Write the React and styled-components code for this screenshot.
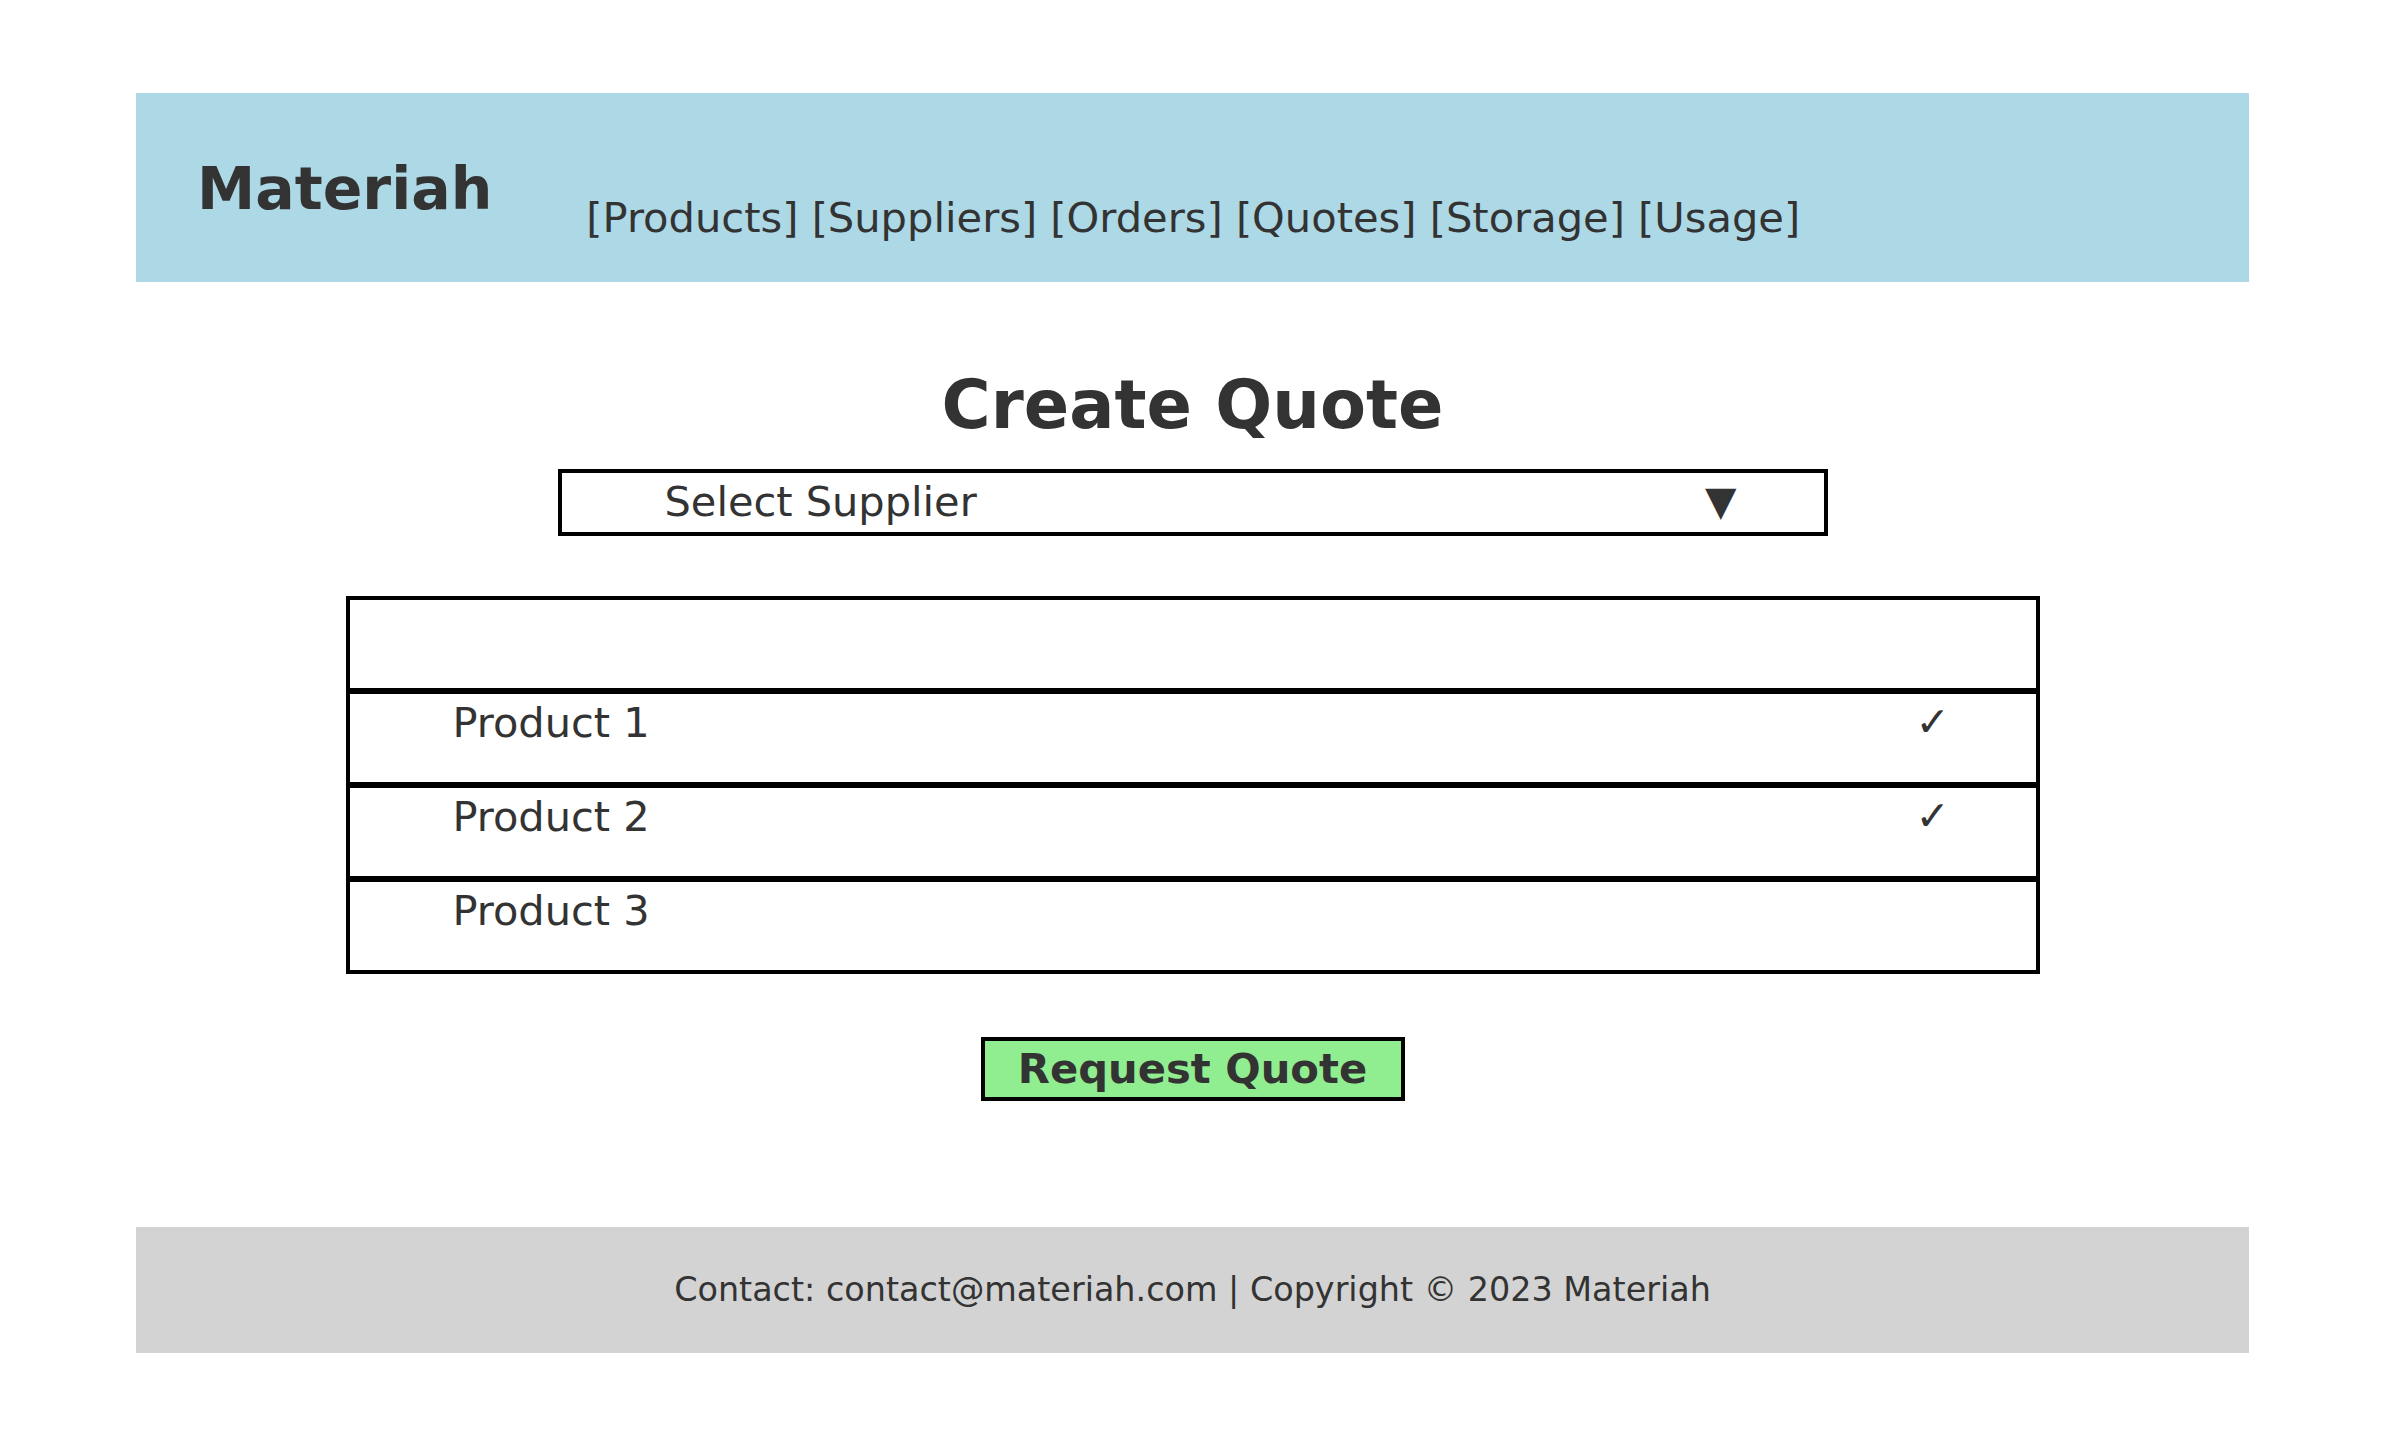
import React from "react";
import styled, { createGlobalStyle } from "styled-components";

const Global = createGlobalStyle`
  html, body { margin: 0; padding: 0; background: #ffffff; }
  body { font-family: "DejaVu Sans", "Liberation Sans", sans-serif; color: #333333; }
`;

const Page = styled.div`
  width: 2113px;
  margin: 0 auto;
  padding-top: 93px;
  display: flex;
  flex-direction: column;
  align-items: center;
`;

const Header = styled.header`
  align-self: stretch;
  height: 189px;
  box-sizing: border-box;
  background: #add8e6;
  display: flex;
  align-items: center;
  padding-left: 61px;
`;

const Logo = styled.h1`
  margin: 4px 0 0;
  font-size: 58.5px;
  line-height: 1;
  font-weight: bold;
  color: #333333;
`;

const Nav = styled.nav`
  margin-left: 94px;
  margin-top: 60px;
  font-size: 41.6px;
  line-height: 1;
  color: #333333;
  white-space: pre;
`;

const Title = styled.h2`
  margin: 90px 0 0;
  font-size: 67px;
  line-height: 1;
  font-weight: bold;
  color: #333333;
`;

const Select = styled.div`
  margin-top: 30px;
  width: 1270px;
  height: 67px;
  box-sizing: border-box;
  border: 4px solid #000000;
  display: flex;
  align-items: center;
  justify-content: space-between;
  padding: 0 87px 2px 103px;
  font-size: 41.5px;
  line-height: 1;
  color: #333333;
`;

const Arrow = styled.span`
  font-size: 41px;
  line-height: 1;
`;

const Table = styled.div`
  margin-top: 60px;
  width: 1694px;
  box-sizing: border-box;
  border: 4px solid #000000;
  display: flex;
  flex-direction: column;
`;

const Row = styled.div`
  box-sizing: content-box;
  display: grid;
  grid-template-columns: 1fr 120px;
  align-items: start;
  font-size: 41.5px;
  line-height: 1;
  color: #333333;
  border-top: ${(p) => (p.$first ? "none" : "6px solid #000000")};
  margin: ${(p) => (p.$first ? "0" : "0 -4px")};
  padding-left: ${(p) => (p.$first ? "103px" : "107px")};
  padding-right: ${(p) => (p.$first ? "0" : "4px")};
  padding-top: ${(p) => (p.$first ? "0" : "8px")};
  height: ${(p) => (p.$first ? "88px" : "80px")};
`;

const Check = styled.span`
  justify-self: start;
  margin-left: 0;
  font-size: 41px;
  line-height: 1;
`;

const Button = styled.button`
  margin-top: 63px;
  width: 424px;
  height: 64px;
  box-sizing: border-box;
  border: 4px solid #000000;
  background: #90ee90;
  font-family: "DejaVu Sans", "Liberation Sans", sans-serif;
  font-size: 41.7px;
  font-weight: bold;
  line-height: 1;
  color: #333333;
  padding: 0;
  cursor: pointer;
`;

const Footer = styled.footer`
  align-self: stretch;
  margin-top: 126px;
  height: 126px;
  box-sizing: border-box;
  padding-bottom: 2px;
  background: #d3d3d3;
  display: flex;
  align-items: center;
  justify-content: center;
  font-size: 33.4px;
  color: #333333;
`;

const products = [
  { name: "Product 1", checked: true },
  { name: "Product 2", checked: true },
  { name: "Product 3", checked: false },
];

export default function App() {
  return (
    <>
      <Global />
      <Page>
        <Header>
          <Logo>Materiah</Logo>
          <Nav>[Products] [Suppliers] [Orders] [Quotes] [Storage] [Usage]</Nav>
        </Header>
        <Title>Create Quote</Title>
        <Select>
          <span>Select Supplier</span>
          <Arrow>▼</Arrow>
        </Select>
        <Table>
          <Row $first />
          {products.map((p) => (
            <Row key={p.name}>
              <span>{p.name}</span>
              <Check>{p.checked ? "✓" : ""}</Check>
            </Row>
          ))}
        </Table>
        <Button>Request Quote</Button>
        <Footer>Contact: contact@materiah.com | Copyright © 2023 Materiah</Footer>
      </Page>
    </>
  );
}
